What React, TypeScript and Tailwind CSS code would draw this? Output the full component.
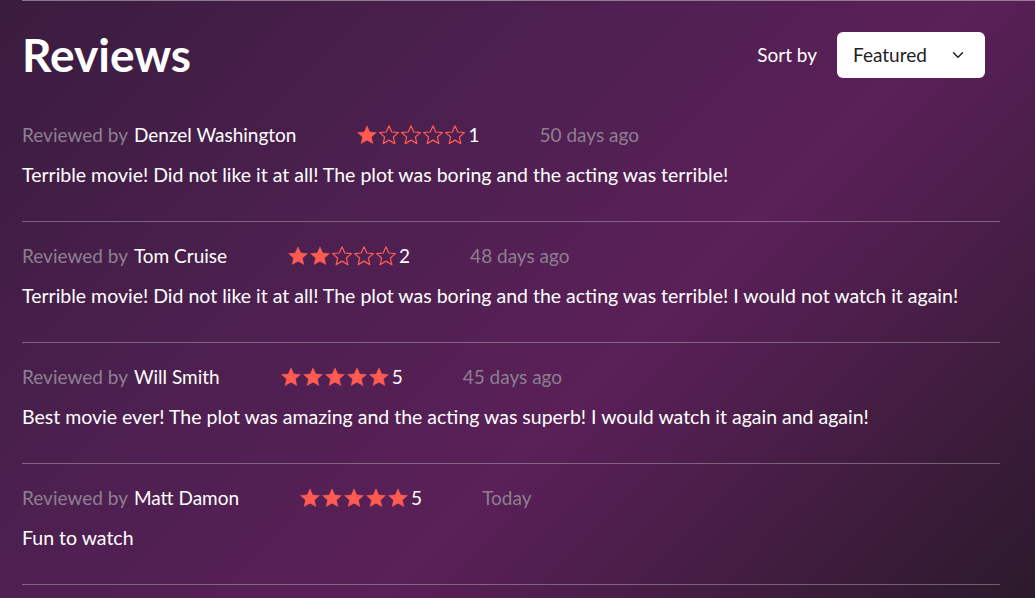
import { ChevronDown } from 'lucide-react'

type Review = {
    name: string
    rating: number
    date: string
    text: string
}

const REVIEWS: Review[] = [
    {
        name: 'Denzel Washington',
        rating: 1,
        date: '50 days ago',
        text: 'Terrible movie! Did not like it at all! The plot was boring and the acting was terrible!',
    },
    {
        name: 'Tom Cruise',
        rating: 2,
        date: '48 days ago',
        text: 'Terrible movie! Did not like it at all! The plot was boring and the acting was terrible! I would not watch it again!',
    },
    {
        name: 'Will Smith',
        rating: 5,
        date: '45 days ago',
        text: 'Best movie ever! The plot was amazing and the acting was superb! I would watch it again and again!',
    },
    {
        name: 'Matt Damon',
        rating: 5,
        date: 'Today',
        text: 'Fun to watch',
    },
]

function Star({ filled }: { filled: boolean }) {
    return (
        <svg viewBox="0 0 24 24" className="w-[22px] h-[22px]">
            <path
                d="M12 2l3 6.7 7.3.7-5.5 4.8 1.6 7.2L12 17.6l-6.4 3.8 1.6-7.2L1.7 9.4 9 8.7z"
                fill={filled ? '#ff5b52' : 'none'}
                stroke="#ff5b52"
                strokeWidth={filled ? 0.5 : 1.3}
                strokeLinejoin="round"
            />
        </svg>
    )
}

function Stars({ rating }: { rating: number }) {
    return (
        <div className="flex items-center ml-[60px]">
            {[1, 2, 3, 4, 5].map((i) => (
                <Star key={i} filled={i <= rating} />
            ))}
            <span className="text-white ml-[2px]">{rating}</span>
        </div>
    )
}

function ReviewRow({ r }: { r: Review }) {
    return (
        <div className="border-b border-white/30 pt-[19px] pb-[31px]">
            <div className="flex items-center h-[30px] text-[19px]">
                <span className="text-[#8d7f90]">Reviewed by</span>
                <span className="text-white ml-[6px]">{r.name}</span>
                <Stars rating={r.rating} />
                <span className="text-[#8d7f90] ml-[60px]">{r.date}</span>
            </div>
            <p className="text-white mt-[10px] leading-[30px] text-[19.5px]">{r.text}</p>
        </div>
    )
}

export default function App() {
    return (
        <div
            className="w-[1035px] h-[598px] overflow-hidden bg-[linear-gradient(135deg,#3a1c3e_0%,#4d2050_35%,#5a2058_60%,#2b1a2b_100%)]"
            style={{ fontFamily: 'Lato, sans-serif' }}
        >
            <div className="ml-[22px] border-t border-white/40">
                <div className="w-[978px]">
                    <div className="flex items-center justify-between pt-[31px] pb-[23px]">
                        <h1 className="text-white text-[46px] font-bold leading-none">Reviews</h1>
                        <div className="flex items-center gap-[20px] mr-[15px]">
                            <span className="text-white text-[19px]">Sort by</span>
                            <button className="flex items-center justify-between w-[148px] h-[46px] bg-white rounded-[6px] pl-[16px] pr-[18px] text-[#222] text-[19px]">
                                Featured
                                <ChevronDown className="w-[18px] h-[18px]" strokeWidth={2} />
                            </button>
                        </div>
                    </div>
                    {REVIEWS.map((r) => (
                        <ReviewRow key={r.name} r={r} />
                    ))}
                </div>
            </div>
        </div>
    )
}
